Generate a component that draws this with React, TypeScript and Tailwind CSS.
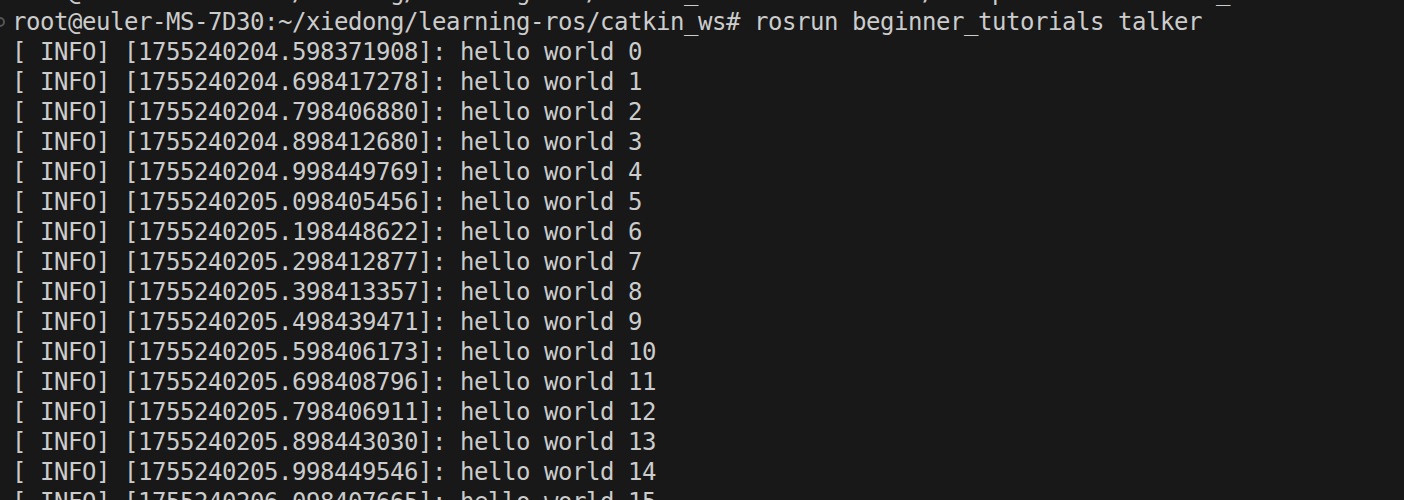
const prompt = 'root@euler-MS-7D30:~/xiedong/learning-ros/catkin_ws#'

const stamps = [
  '1755240204.598371908',
  '1755240204.698417278',
  '1755240204.798406880',
  '1755240204.898412680',
  '1755240204.998449769',
  '1755240205.098405456',
  '1755240205.198448622',
  '1755240205.298412877',
  '1755240205.398413357',
  '1755240205.498439471',
  '1755240205.598406173',
  '1755240205.698408796',
  '1755240205.798406911',
  '1755240205.898443030',
  '1755240205.998449546',
  '1755240206.098407665',
]

export default function App() {
  return (
    <div className="w-[1404px] h-[500px] overflow-hidden bg-[#181818] text-[#cccccc]">
      <div className="-mt-[23px] pl-[12px] font-['DejaVu_Sans_Mono',monospace] text-[24px] leading-[30px] tracking-[-0.45px] whitespace-pre">
        {/* previous command, cut off by the top edge */}
        <div>{prompt} source devel/setup.bash && catkin_make</div>

        <div className="relative">
          {/* command decoration circle */}
          <span className="absolute -left-[17px] top-[10px] w-[10px] h-[10px] rounded-full border-2 border-[#555555]" />
          {prompt} rosrun beginner_tutorials talker
        </div>

        {stamps.map((s, i) => (
          <div key={s}>
            [ INFO] [{s}]: hello world {i}
          </div>
        ))}
      </div>
    </div>
  )
}
